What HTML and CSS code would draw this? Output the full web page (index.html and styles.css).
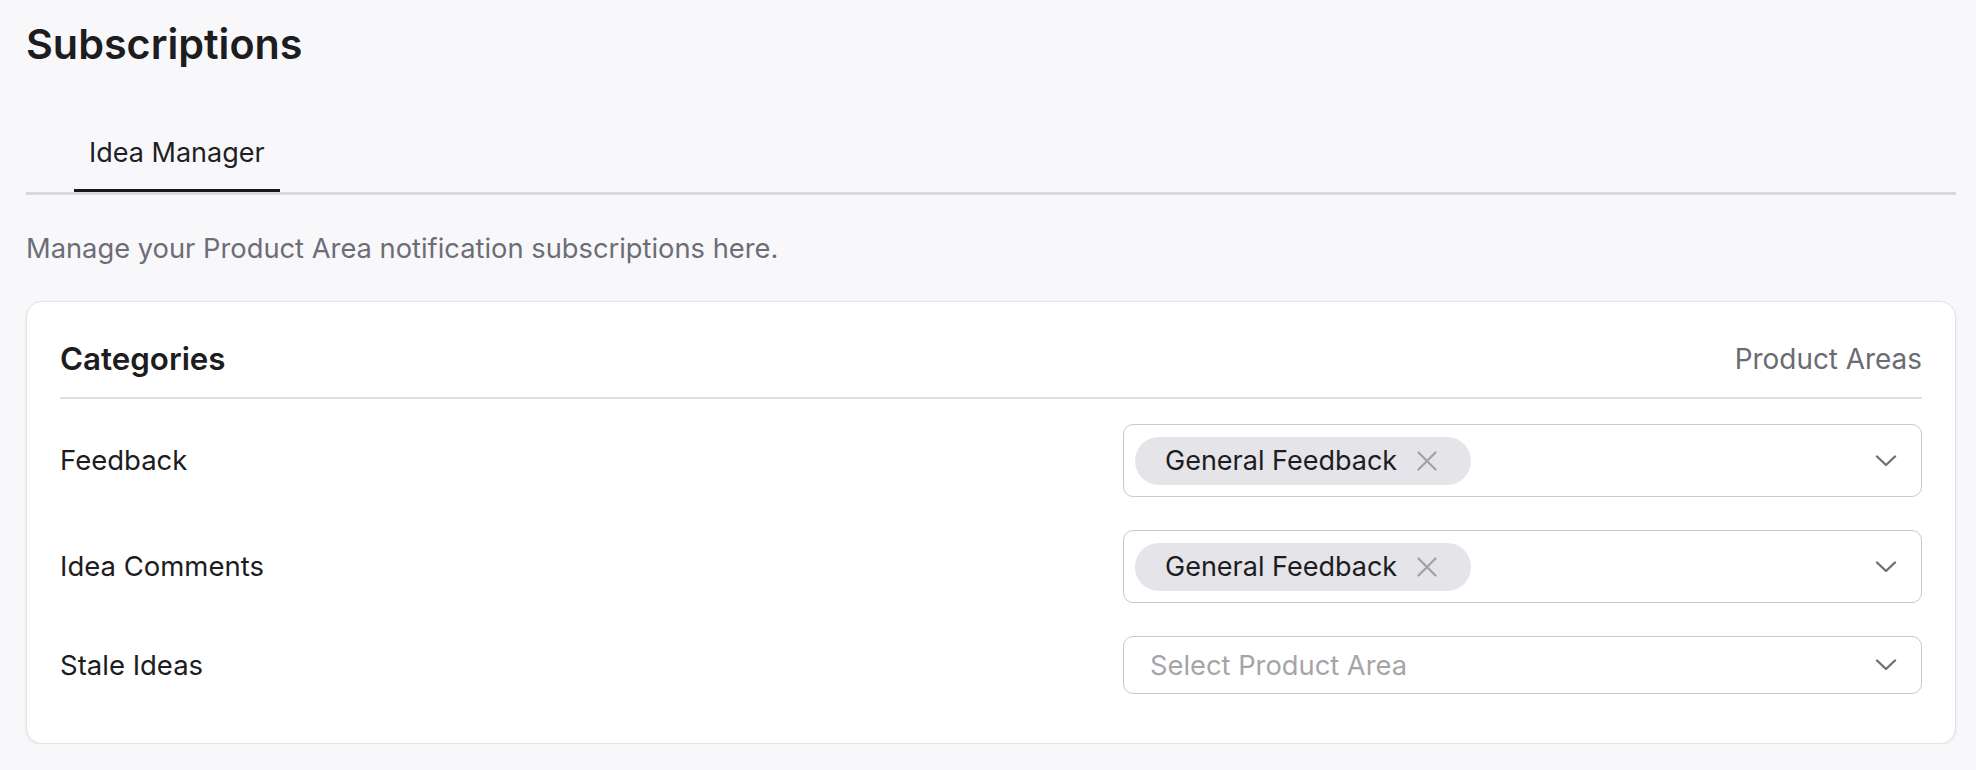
FILE: index.html
```html
<!DOCTYPE html>
<html lang="en">
<head>
<meta charset="utf-8">
<title>Subscriptions</title>
<link rel="stylesheet" href="styles.css">
</head>
<body>
<main class="page">
  <h1 class="page-title">Subscriptions</h1>

  <nav class="tabs">
    <div class="tab tab-active">Idea Manager</div>
  </nav>

  <p class="intro">Manage your Product Area notification subscriptions here.</p>

  <section class="card">
    <div class="card-header">
      <h2 class="card-title">Categories</h2>
      <span class="card-aside">Product Areas</span>
    </div>

    <div class="rows">
      <div class="row">
        <span class="row-label">Feedback</span>
        <div class="select">
          <div class="select-values">
            <span class="chip">
              <span class="chip-text">General Feedback</span>
              <svg class="chip-x" width="20" height="20" viewBox="0 0 20 20" aria-hidden="true"><path d="M1.5 1.5 L18.5 18.5 M18.5 1.5 L1.5 18.5"/></svg>
            </span>
          </div>
          <svg class="chevron" width="22" height="12" viewBox="0 0 22 12" aria-hidden="true"><path d="M2 1.5 L11 10 L20 1.5"/></svg>
        </div>
      </div>

      <div class="row">
        <span class="row-label">Idea Comments</span>
        <div class="select">
          <div class="select-values">
            <span class="chip">
              <span class="chip-text">General Feedback</span>
              <svg class="chip-x" width="20" height="20" viewBox="0 0 20 20" aria-hidden="true"><path d="M1.5 1.5 L18.5 18.5 M18.5 1.5 L1.5 18.5"/></svg>
            </span>
          </div>
          <svg class="chevron" width="22" height="12" viewBox="0 0 22 12" aria-hidden="true"><path d="M2 1.5 L11 10 L20 1.5"/></svg>
        </div>
      </div>

      <div class="row">
        <span class="row-label">Stale Ideas</span>
        <div class="select">
          <div class="select-values">
            <span class="placeholder">Select Product Area</span>
          </div>
          <svg class="chevron" width="22" height="12" viewBox="0 0 22 12" aria-hidden="true"><path d="M2 1.5 L11 10 L20 1.5"/></svg>
        </div>
      </div>
    </div>
  </section>
</main>
</body>
</html>
```
FILE: styles.css
```css
* { box-sizing: border-box; }

html, body {
  margin: 0;
  background: #f8f8fa;
}

body {
  font-family: Inter, "Noto Sans", "Liberation Sans", sans-serif;
  color: #1e1e23;
}

.page {
  padding: 19px 20px 0 26px;
}

.page-title {
  margin: 0;
  font-size: 41.3px;
  line-height: 50px;
  font-weight: 600;
  color: #1c1c21;
}

.tabs {
  display: flex;
  margin-top: 47px;
  padding-left: 48px;
  border-bottom: 3px solid #d9d9dd;
}

.tab {
  font-size: 27px;
  line-height: 33px;
  padding: 20px 15px 20px;
  color: #1f1f24;
  border-bottom: 3px solid transparent;
}

.tab-active {
  border-bottom-color: #18181b;
}

.intro {
  margin: 37px 0 0;
  font-size: 27.3px;
  line-height: 33px;
  color: #6d6d77;
}

.card {
  margin-top: 36px;
  background: #ffffff;
  border: 1px solid #e3e3e6;
  border-radius: 16px;
  box-shadow: 0 1px 3px rgba(0, 0, 0, 0.08);
  padding: 38px 33px 49px;
}

.card-header {
  display: flex;
  align-items: center;
  justify-content: space-between;
  padding-bottom: 19px;
  border-bottom: 2px solid #dedee2;
}

.card-title {
  margin: 0;
  font-size: 31.3px;
  line-height: 38px;
  font-weight: 600;
  color: #1c1c21;
}

.card-aside {
  font-size: 27.9px;
  line-height: 33px;
  color: #6b6b73;
}

.rows {
  display: flex;
  flex-direction: column;
  gap: 33px;
  margin-top: 25px;
}

.row {
  display: grid;
  grid-template-columns: 1fr 799px;
  align-items: center;
}

.row-label {
  font-size: 27.5px;
  line-height: 33px;
  font-weight: 400;
  color: #1c1c21;
}

.select {
  display: flex;
  align-items: center;
  border: 1px solid #c9c9cd;
  border-radius: 10px;
  padding: 11.5px 24px 11.5px 11px;
  background: #ffffff;
}

.select-values {
  flex: 1;
  display: flex;
  align-items: center;
  gap: 10px;
  min-height: 33px;
}

.chip {
  display: inline-flex;
  align-items: center;
  height: 48px;
  padding: 0 34px 0 30px;
  border-radius: 24px;
  background: #e4e4e9;
  gap: 20px;
}

.chip-text {
  font-size: 27px;
  line-height: 33px;
  color: #1c1c21;
}

.chip-x {
  display: block;
  fill: none;
  stroke: #a0a0a6;
  stroke-width: 2.2;
  stroke-linecap: round;
}

.placeholder {
  padding-left: 15px;
  font-size: 27.3px;
  line-height: 33px;
  color: #a5a5a9;
}

.chevron {
  display: block;
  flex: none;
  fill: none;
  stroke: #707076;
  stroke-width: 2.4;
  stroke-linecap: round;
  stroke-linejoin: round;
}
```
